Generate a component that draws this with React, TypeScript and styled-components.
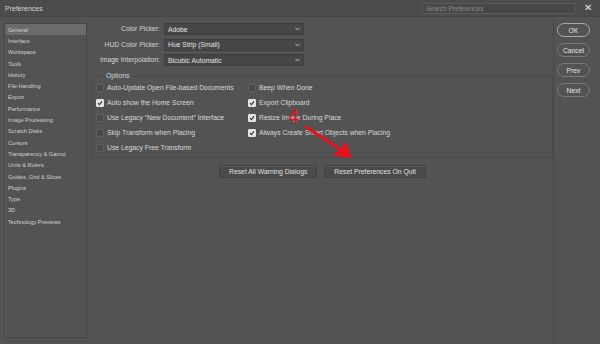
import { Fragment } from "react";
import styled, { createGlobalStyle } from "styled-components";

const GlobalStyle = createGlobalStyle`
  html, body {
    margin: 0;
    padding: 0;
    background: #535353;
  }
  body {
    font-family: "Liberation Sans", Arial, sans-serif;
  }
`;

const Window = styled.div`
  position: relative;
  width: 600px;
  height: 344px;
  display: flex;
  flex-direction: column;
  background: #535353;
  color: #dcdcdc;
  overflow: hidden;
`;

const TitleBar = styled.header`
  height: 16px;
  flex: none;
  display: flex;
  align-items: center;
  padding-left: 5px;
  background: #4c4c4c;
  border-bottom: 1px solid #464646;
`;

const Title = styled.span`
  font-size: 7px;
  color: #d4d4d4;
`;

const Search = styled.div`
  margin-left: auto;
  width: 153px;
  height: 11px;
  box-sizing: border-box;
  display: flex;
  align-items: center;
  padding-left: 3px;
  background: #474747;
  border: 1px solid #5c5c5c;
  font-size: 6.5px;
  color: #8c8c8c;
`;

const Close = styled.span`
  width: 25px;
  text-align: center;
  font-size: 10px;
  line-height: 10px;
  color: #e6e6e6;
`;

const Body = styled.div`
  flex: 1;
  display: flex;
  min-height: 0;
`;

const Sidebar = styled.nav`
  width: 83px;
  margin: 6px 0 6px 4px;
  box-sizing: border-box;
  border: 1px solid #454545;
  box-shadow: inset 1px 1px 0 #595959;
  display: flex;
  flex-direction: column;
`;

const NavItem = styled.div<{ $active?: boolean }>`
  height: 11.3px;
  display: flex;
  align-items: center;
  padding-left: 3px;
  font-size: 5.6px;
  color: #d2d2d2;
  white-space: nowrap;
  background: ${(p) => (p.$active ? "#6b6b6b" : "transparent")};
`;

const Main = styled.main`
  flex: 1;
  padding: 6px 0 0 5px;
  display: flex;
  flex-direction: column;
`;

const FormGrid = styled.div`
  display: grid;
  grid-template-columns: 68px 140px;
  column-gap: 4px;
  row-gap: 3.5px;
`;

const Label = styled.span`
  font-size: 6.8px;
  line-height: 12px;
  text-align: right;
  color: #d6d6d6;
  white-space: nowrap;
`;

const Select = styled.div`
  height: 12px;
  box-sizing: border-box;
  display: flex;
  align-items: center;
  justify-content: space-between;
  padding: 0 3px 0 3px;
  background: #464646;
  border: 1px solid #3e3e3e;
  font-size: 6.8px;
  color: #e2e2e2;
`;

const Chevron = styled.svg`
  width: 5px;
  height: 4px;
`;

const Group = styled.fieldset`
  margin: 6px 0 0 0;
  padding: 0 0 1.5px 3px;
  border: 1px solid #4a4a4a;
  min-width: 0;
`;

const Legend = styled.legend`
  margin-left: 7px;
  padding: 0 3px;
  font-size: 6.8px;
  line-height: 8px;
  color: #d6d6d6;
`;

const Checks = styled.div`
  display: grid;
  grid-template-columns: 152px 1fr;
  grid-template-rows: repeat(5, 15px);
  grid-auto-flow: column;
`;

const CheckRow = styled.label`
  display: flex;
  align-items: center;
  gap: 3px;
  font-size: 6.8px;
  color: #d8d8d8;
  white-space: nowrap;
`;

const Box = styled.span<{ $checked?: boolean }>`
  width: 8px;
  height: 8px;
  box-sizing: border-box;
  flex: none;
  display: flex;
  align-items: center;
  justify-content: center;
  border-radius: 1px;
  background: ${(p) => (p.$checked ? "#e4e4e4" : "#4a4a4a")};
  border: 1px solid ${(p) => (p.$checked ? "#e4e4e4" : "#5f5f5f")};
`;

const Actions = styled.div`
  margin-top: 7px;
  display: flex;
  justify-content: center;
  gap: 7px;
`;

const ActionButton = styled.button`
  height: 13px;
  padding: 0 9px;
  box-sizing: border-box;
  background: #4a4a4a;
  border: 1px solid #434343;
  box-shadow: inset 0 1px 0 #575757;
  font-family: inherit;
  font-size: 6.8px;
  color: #e0e0e0;
  white-space: nowrap;
`;

const ButtonColumn = styled.aside`
  width: 43px;
  border-left: 1px solid #4a4a4a;
  padding: 6px 0 0 3px;
  display: flex;
  flex-direction: column;
  gap: 6px;
`;

const Pill = styled.button<{ $primary?: boolean }>`
  width: 33px;
  height: 14px;
  box-sizing: border-box;
  border-radius: 7px;
  background: #535353;
  border: 1px solid ${(p) => (p.$primary ? "#a8a8a8" : "#7a7a7a")};
  font-family: inherit;
  font-size: 6.8px;
  color: #e4e4e4;
  padding: 0;
`;

const Annotation = styled.svg`
  position: absolute;
  left: 0;
  top: 0;
  width: 600px;
  height: 344px;
  pointer-events: none;
`;

const navItems = [
  "General",
  "Interface",
  "Workspace",
  "Tools",
  "History",
  "File Handling",
  "Export",
  "Performance",
  "Image Processing",
  "Scratch Disks",
  "Cursors",
  "Transparency & Gamut",
  "Units & Rulers",
  "Guides, Grid & Slices",
  "Plugins",
  "Type",
  "3D",
  "Technology Previews",
];

const selects = [
  { label: "Color Picker:", value: "Adobe" },
  { label: "HUD Color Picker:", value: "Hue Strip (Small)" },
  { label: "Image Interpolation:", value: "Bicubic Automatic" },
];

const options = [
  { text: "Auto-Update Open File-based Documents", checked: false },
  { text: "Auto show the Home Screen", checked: true },
  { text: "Use Legacy \u201CNew Document\u201D Interface", checked: false },
  { text: "Skip Transform when Placing", checked: false },
  { text: "Use Legacy Free Transform", checked: false },
  { text: "Beep When Done", checked: false },
  { text: "Export Clipboard", checked: true },
  { text: "Resize Image During Place", checked: true },
  { text: "Always Create Smart Objects when Placing", checked: true },
];

function Check() {
  return (
    <svg width="6" height="6" viewBox="0 0 6 6">
      <path d="M1 3.2 L2.4 4.6 L5 1.4" fill="none" stroke="#333" strokeWidth="1.2" />
    </svg>
  );
}

export default function App() {
  return (
    <Window>
      <GlobalStyle />
      <TitleBar>
        <Title>Preferences</Title>
        <Search>Search Preferences</Search>
        <Close>✕</Close>
      </TitleBar>
      <Body>
        <Sidebar>
          {navItems.map((n, i) => (
            <NavItem key={n} $active={i === 0}>
              {n}
            </NavItem>
          ))}
        </Sidebar>
        <Main>
          <FormGrid>
            {selects.map((s) => (
              <Fragment key={s.label}>
                <Label>{s.label}</Label>
                <Select>
                  {s.value}
                  <Chevron viewBox="0 0 5 4">
                    <path d="M0.5 1 L2.5 3 L4.5 1" fill="none" stroke="#cfcfcf" strokeWidth="0.9" />
                  </Chevron>
                </Select>
              </Fragment>
            ))}
          </FormGrid>
          <Group>
            <Legend>Options</Legend>
            <Checks>
              {options.map((o) => (
                <CheckRow key={o.text}>
                  <Box $checked={o.checked}>{o.checked && <Check />}</Box>
                  {o.text}
                </CheckRow>
              ))}
            </Checks>
          </Group>
          <Actions>
            <ActionButton>Reset All Warning Dialogs</ActionButton>
            <ActionButton>Reset Preferences On Quit</ActionButton>
          </Actions>
        </Main>
        <ButtonColumn>
          <Pill $primary>OK</Pill>
          <Pill>Cancel</Pill>
          <Pill>Prev</Pill>
          <Pill>Next</Pill>
        </ButtonColumn>
      </Body>
      <Annotation viewBox="0 0 600 344">
        <text
          x="288"
          y="123"
          fontFamily="Liberation Sans, Arial, sans-serif"
          fontSize="20"
          fill="#e3121c"
        >
          4
        </text>
        <line x1="306" y1="127" x2="340" y2="149" stroke="#e3121c" strokeWidth="3" strokeLinecap="round" />
        <polygon points="352,158 333,156 346,142" fill="#e3121c" />
      </Annotation>
    </Window>
  );
}
